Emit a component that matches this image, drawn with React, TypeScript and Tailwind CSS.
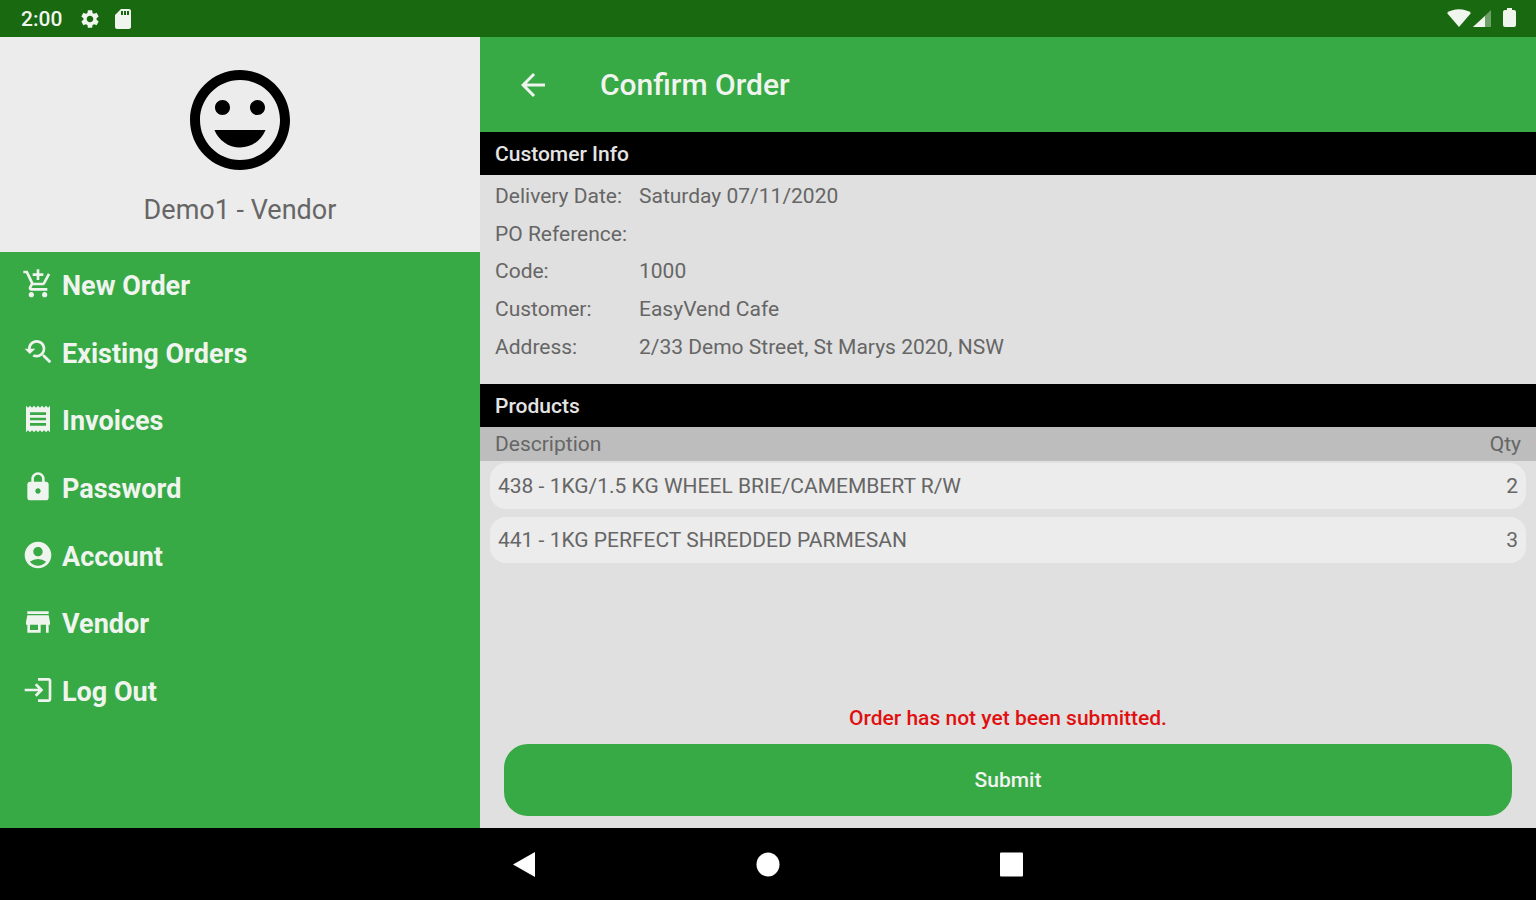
import type { JSX } from 'react'
import type { IconType } from 'react-icons'
import {
  MdAccountCircle,
  MdAddShoppingCart,
  MdArrowBack,
  MdLock,
  MdLogin,
  MdMood,
  MdReceipt,
  MdSdCard,
  MdSettings,
  MdStore,
  MdYoutubeSearchedFor,
} from 'react-icons/md'

interface MenuItem {
  label: string
  icon: IconType
}

const MENU: MenuItem[] = [
  { label: 'New Order', icon: MdAddShoppingCart },
  { label: 'Existing Orders', icon: MdYoutubeSearchedFor },
  { label: 'Invoices', icon: MdReceipt },
  { label: 'Password', icon: MdLock },
  { label: 'Account', icon: MdAccountCircle },
  { label: 'Vendor', icon: MdStore },
  { label: 'Log Out', icon: MdLogin },
]

const CUSTOMER = [
  { label: 'Delivery Date:', value: 'Saturday 07/11/2020' },
  { label: 'PO Reference:', value: '' },
  { label: 'Code:', value: '1000' },
  { label: 'Customer:', value: 'EasyVend Cafe' },
  { label: 'Address:', value: '2/33 Demo Street, St Marys 2020, NSW' },
]

const PRODUCTS = [
  { name: '438 - 1KG/1.5 KG WHEEL BRIE/CAMEMBERT R/W', qty: 2 },
  { name: '441 - 1KG PERFECT SHREDDED PARMESAN', qty: 3 },
]

function StatusBar(): JSX.Element {
  return (
    <div className="flex h-[37px] shrink-0 items-center justify-between bg-[#18690f] pr-5 pl-[21px] text-[#f0f5ee]">
      <div className="flex items-center">
        <span className="w-[58px] text-[21px] leading-6 font-medium">2:00</span>
        <MdSettings className="size-[22px]" />
        <MdSdCard className="ml-2.5 size-6" />
      </div>
      {/* wifi, signal, battery */}
      <svg width="70" height="24" viewBox="0 0 70 24" fill="currentColor" aria-hidden="true">
        <path d="M1 6C7 1 19 1 25 6L13 20z" />
        <path d="M45 3v17H27z" opacity="0.4" />
        <path d="M39 9v11H27z" />
        <path d="M61 1h5v2h2q2 0 2 2v13q0 2-2 2h-9q-2 0-2-2V5q0-2 2-2h2z" />
      </svg>
    </div>
  )
}

function Sidebar(): JSX.Element {
  return (
    <aside className="flex w-[31.25%] shrink-0 flex-col bg-[#37a945]">
      <div className="flex h-[215px] flex-col items-center bg-[#ececec] pt-[23px]">
        <MdMood className="size-[120px] text-black" />
        <p className="mt-3.5 text-[27px] leading-8 text-[#666666]">Demo1 - Vendor</p>
      </div>
      <nav>
        <ul className="grid h-[474px] grid-rows-7">
          {MENU.map(({ label, icon: Icon }) => (
            <li key={label} className="flex">
              <a href="#" className="flex w-full items-center gap-2 pl-[22px] text-[27px] leading-8 font-bold text-[#f0f4ef]">
                <Icon className="mb-1 size-8 shrink-0" />
                {label}
              </a>
            </li>
          ))}
        </ul>
      </nav>
    </aside>
  )
}

function SectionTitle({ children }: { children: string }): JSX.Element {
  return <h2 className="flex h-[43px] items-center bg-black px-[15px] text-[21px] leading-7 font-medium text-[#e4e4e4]">{children}</h2>
}

function SystemNav(): JSX.Element {
  return (
    <div className="flex h-[72px] shrink-0 items-center justify-center gap-[212px] bg-black text-white">
      <button aria-label="Back">
        <svg width="32" height="32" viewBox="0 0 32 32" fill="currentColor">
          <path d="M27 4v25L5 16.500z" />
        </svg>
      </button>
      <button aria-label="Home">
        <svg width="32" height="32" viewBox="0 0 32 32" fill="currentColor">
          <ellipse cx="16" cy="16.500" rx="11.500" ry="12" />
        </svg>
      </button>
      <button aria-label="Overview">
        <svg width="32" height="32" viewBox="0 0 32 32" fill="currentColor">
          <rect x="4" y="4.500" width="23" height="24" rx="1" />
        </svg>
      </button>
    </div>
  )
}

export default function App(): JSX.Element {
  return (
    <div className="flex min-h-screen flex-col font-['Roboto',sans-serif]">
      <StatusBar />
      <div className="flex flex-1">
        <Sidebar />
        <main className="flex min-w-0 flex-1 flex-col bg-[#e0e0e0] text-[21px] leading-7 text-[#666666]">
          <header className="flex h-[95px] items-center bg-[#37a945] px-[35px] text-[#f0f4ef]">
            <button aria-label="Back" className="mr-[49px]">
              <MdArrowBack className="size-9" />
            </button>
            <h1 className="text-[30px] leading-9 font-medium">Confirm Order</h1>
          </header>

          <SectionTitle>Customer Info</SectionTitle>
          <dl className="mb-[18px] grid h-[191px] grid-rows-5 px-[15px] pt-0.5">
            {CUSTOMER.map((row) => (
              <div key={row.label} className="flex items-center">
                <dt className="w-36 shrink-0">{row.label}</dt>
                <dd>{row.value}</dd>
              </div>
            ))}
          </dl>

          <SectionTitle>Products</SectionTitle>
          <table className="block">
            <thead className="block bg-[#bdbdbd]">
              <tr className="flex h-[34px] items-center justify-between px-[15px]">
                <th className="font-normal">Description</th>
                <th className="font-normal">Qty</th>
              </tr>
            </thead>
            <tbody className="flex flex-col gap-2 px-2.5 pt-0.5">
              {PRODUCTS.map((p) => (
                <tr key={p.name} className="flex h-[46px] items-center justify-between rounded-2xl bg-[#ececec] px-2">
                  <td>{p.name}</td>
                  <td>{p.qty}</td>
                </tr>
              ))}
            </tbody>
          </table>

          <div className="mt-auto flex flex-col px-6 pb-3">
            <p className="mb-3 text-center font-medium text-[#e01010]">Order has not yet been submitted.</p>
            <button className="h-[72px] rounded-3xl bg-[#37a945] font-medium text-[#f0f4ef]">Submit</button>
          </div>
        </main>
      </div>
      <SystemNav />
    </div>
  )
}
